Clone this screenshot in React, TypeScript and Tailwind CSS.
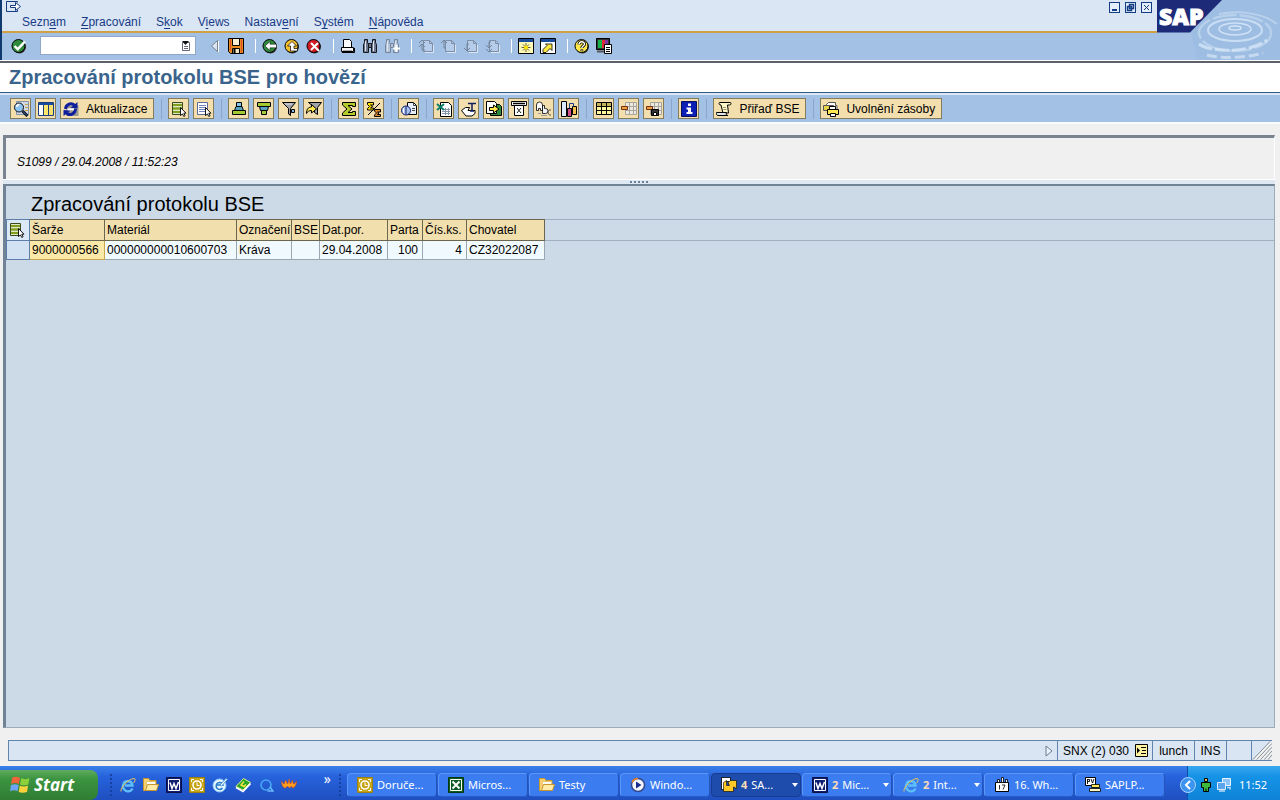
import type { ReactNode } from 'react';

/**
 * SAP GUI list screen with the Windows taskbar underneath
 */

interface IconProps {
  children: ReactNode;
}

function Icon({ children }: IconProps) {
  return (
    <svg
      viewBox="0 0 16 16"
      className="h-4 w-4 shrink-0"
      fill="none"
      stroke="#000"
      strokeWidth="1"
      aria-hidden="true"
    >
      {children}
    </svg>
  );
}

/* Standard toolbar icons */

const CheckIcon = () => (
  <Icon>
    <circle cx="8.5" cy="9" r="6.5" fill="#333" stroke="none" />
    <circle cx="7.5" cy="8" r="6.5" fill="#2f8a3c" />
    <path d="M3.5 8l3.2 3.2L14 3.5" stroke="#fff" strokeWidth="2.4" />
  </Icon>
);

const TriangleIcon = () => (
  <Icon>
    <path d="M11.5 2.5v11L5.5 8z" fill="#dbe6f4" stroke="#77808c" />
    <path d="M12.5 3v11" stroke="#fff" />
  </Icon>
);

const SaveIcon = () => (
  <Icon>
    <path d="M.5.5h15v15H2.5l-2-2z" fill="#e88a20" />
    <path d="M4.5.5h7v7h-7z" fill="#fbeed0" />
    <path d="M4.5 10.5h7v5h-7z" fill="#f6e6c0" />
    <path d="M6.5 11v4" strokeWidth="2" />
    <path d="M2.5 1.5v11M13.5 1.5v13" stroke="#d8502c" />
  </Icon>
);

const BackIcon = () => (
  <Icon>
    <circle cx="8.5" cy="9" r="6.5" fill="#333" stroke="none" />
    <circle cx="7.5" cy="8" r="6.5" fill="#2f8a3c" />
    <path d="M3 8l5-4.5v2.7h6.5v3.6H8v2.7z" fill="#fff" strokeWidth=".5" />
  </Icon>
);

const ExitIcon = () => (
  <Icon>
    <circle cx="8.5" cy="9" r="6.5" fill="#333" stroke="none" />
    <circle cx="7.5" cy="8" r="6.5" fill="#f6c02c" />
    <path d="M8 3.5l4.5 4.5H10v2.5h3.5V13h-7V8h-3z" fill="#fff" strokeWidth=".7" />
  </Icon>
);

const CancelIcon = () => (
  <Icon>
    <circle cx="8.5" cy="9" r="6.5" fill="#333" stroke="none" />
    <circle cx="7.5" cy="8" r="6.5" fill="#d01c24" />
    <path d="M5 5l8 8M12 5l-7 7" stroke="#fff" strokeWidth="2" />
  </Icon>
);

const PrintIcon = () => (
  <Icon>
    <path d="M3.5 1.5h6l2 2v6h-8z" fill="#fff" />
    <path d="M1.5 9.5h12v4h-12z" fill="#f4f4f4" />
    <path d="M2 14.5h12.5V10" />
    <path d="M3 12.5h9" stroke="#aaa" />
  </Icon>
);

interface BinocularsProps {
  next?: boolean;
}

const BinocularsIcon = ({ next }: BinocularsProps) => (
  <Icon>
    <g stroke={next ? '#74859c' : '#16181d'} fill={next ? '#b3c3d8' : '#6d788e'}>
      <path d="M2.5 1.5h3v3l1 2v8h-5v-8l1-2z" />
      <path d="M10.5 1.5h3v3l1 2v8h-5v-8l1-2z" />
      <path d="M6.5 5.5h3v4h-3z" />
      <path d="M3.5 3v10M11.5 3v10" stroke="#dfe6f0" />
    </g>
    {next && <path d="M9 10.5h7M12.5 7v7" stroke="#fff" strokeWidth="2" />}
  </Icon>
);

interface PageIconProps {
  dir: 'first' | 'prev' | 'next' | 'last';
}

const arrows = {
  first: 'M1 5l3-3 3 3M1 9l3-3 3 3M4 6v6h3',
  prev: 'M1 5l3-3 3 3M4 2v8h2',
  next: 'M2 10l3 3 3-3M5 13V6h2',
  last: 'M2 7l3 3 3-3M2 11l3 3 3-3M5 10V4h2',
};

const PageIcon = ({ dir }: PageIconProps) => (
  <Icon>
    <path d="M5.5 2.5h6l3 3v8h-9z" stroke="#7d8ea6" fill="#b5cdea" />
    <path d="M11.5 2.5v3h3" stroke="#7d8ea6" />
    <path d={arrows[dir]} stroke="#73849b" />
    <path d="M7 14.5h8.5V7" stroke="#d8e6f6" />
  </Icon>
);

const SessionIcon = () => (
  <Icon>
    <path d="M.5.5h15v15H.5z" fill="#fdf9b8" />
    <path d="M1 2.5h14" stroke="#1a4c9c" strokeWidth="3" />
    <path d="M8 5v9M3.5 9.5h9M5 6.5l6 6M11 6.5l-6 6" stroke="#3c3a10" strokeWidth=".8" />
    <circle cx="8" cy="9.5" r="2" fill="#ffe400" stroke="none" />
  </Icon>
);

const ShortcutIcon = () => (
  <Icon>
    <path d="M.5.5h15v15H.5z" fill="#fff" />
    <path d="M1 2.5h14" stroke="#1a4c9c" strokeWidth="3" />
    <path d="M3 14.5v-3l4-4L5.5 6H12v6.5l-2-2-4 4z" fill="#ffe840" strokeWidth=".8" />
  </Icon>
);

const HelpIcon = () => (
  <Icon>
    <circle cx="8.5" cy="9" r="6.5" fill="#333" stroke="none" />
    <circle cx="7.5" cy="8" r="6.5" fill="#ffe94a" />
    <path d="M5 6.5C5 3 10.5 3 10.5 6c0 2-2.7 2-2.7 4" strokeWidth="3" />
    <path d="M5 6.5C5 3 10.5 3 10.5 6c0 2-2.7 2-2.7 4" stroke="#fff" strokeWidth="1.4" />
    <path d="M6.8 11.5h2V13h-2z" fill="#fff" strokeWidth=".6" />
  </Icon>
);

const LayoutIcon = () => (
  <Icon>
    <path d="M.5.5h13v11H.5z" fill="#333" />
    <path d="M2 2h4v8H2z" fill="#18b048" stroke="none" />
    <path d="M6 2h3v8H6z" fill="#e02838" stroke="none" />
    <path d="M9 2h3v4H9z" fill="#8030a0" stroke="none" />
    <path d="M1 13.5h7" stroke="#555" strokeWidth="2" />
    <path d="M8.5 6.5h7v9h-7z" fill="#fff" />
    <path d="M10 9.5h4M10 11.5h4M10 13.5h4" />
  </Icon>
);

/* Application toolbar icons */

const DetailIcon = () => (
  <Icon>
    <path d="M3.5.5h12v13h-12z" fill="#cfd8e4" stroke="#8593a8" />
    <path d="M12 3.5h3M12 6.5h3M12 9.5h3" stroke="#c2a34a" />
    <circle cx="6" cy="6.5" r="4.5" fill="#8ec4f2" stroke="#111" />
    <path d="M3.5 6a3 3 0 013-2.5" stroke="#fff" strokeWidth="1.5" />
    <path d="M9.5 10l5 5" stroke="#111" strokeWidth="3" />
    <path d="M10 10.5l4 4" stroke="#2a6cc8" />
  </Icon>
);

const ColumnsIcon = () => (
  <Icon>
    <path d="M.5 1.5h15v13H.5z" fill="#fff" stroke="#1a3d80" />
    <path d="M6 4h4v10H6z" fill="#ffe86a" stroke="none" />
    <path d="M11 4h4v10h-4z" fill="#f8e070" stroke="none" />
    <path d="M1 3h14" stroke="#1a4c9c" strokeWidth="2" />
    <path d="M5.5 4v10M10.5 4v10" stroke="#1a3d80" />
  </Icon>
);

const RefreshIcon = () => (
  <Icon>
    <path d="M3.5 4.5h12v10.5h-12z" fill="#9a9a92" stroke="none" />
    <path d="M12 5C9.500 1 3 2.5 2.5 8" stroke="#10209c" strokeWidth="3" />
    <path d="M3 11c2 4 8.500 3.500 9.500-3" stroke="#10209c" strokeWidth="3" />
    <path d="M7.500 7l7 .5V1z" fill="#10209c" stroke="none" />
    <path d="M7.500 9.500L.5 9v6z" fill="#10209c" stroke="none" />
    <path d="M4.500 8.300h6.500" stroke="#fff" strokeWidth="2" />
  </Icon>
);

interface SelectIconProps {
  all?: boolean;
}

const SelectIcon = ({ all }: SelectIconProps) => (
  <Icon>
    <path d="M1.5 1.5h10v12h-10z" fill="#fff" stroke={all ? '#3a4a18' : '#5a6a9a'} />
    {all ? (
      <path d="M2 4h9M2 7.5h9M2 11h9" stroke="#7f9e1e" strokeWidth="2.4" />
    ) : (
      <path d="M3 4.5h7M3 6.5h7M3 8.5h7M3 10.5h7" stroke="#6f82bd" />
    )}
    <path d="M9.5 6.5v8l2-1.5 1.3 2.5 1.3-.8-1.3-2.5H15z" fill="#fff" strokeWidth=".9" />
  </Icon>
);

const SortUpIcon = () => (
  <Icon>
    <path d="M5.5 5.5v-4h5v4z" fill="#84c4e8" />
    <path d="M3.5 9.5l1.5-4h6l1.5 4z" fill="#58a0c0" />
    <path d="M1.5 13.5v-4h13v4z" fill="#a2c832" />
  </Icon>
);

const SortDownIcon = () => (
  <Icon>
    <path d="M1.5 1.5h13v4h-13z" fill="#a2c832" />
    <path d="M3.5 5.5h9l-1 4h-7z" fill="#58a0c0" />
    <path d="M5.5 9.5h5v4h-5z" fill="#a2c832" />
  </Icon>
);

const FilterIcon = () => (
  <Icon>
    <path d="M1.5 1.5h13l-5 6v7l-2-1.5V7.5z" fill="#a0a3a9" />
    <path d="M4 3h7" stroke="#e4e6ea" />
    <path d="M10.5 8.5h3v3h-3z" fill="#84b8e8" />
  </Icon>
);

const FilterDeleteIcon = () => (
  <Icon>
    <path d="M2.5 1.5h13l-4 5v7l-3-2v-5z" fill="#a0a3a9" />
    <path d="M.5 12.5c0-4 1.5-6.5 5-6.5V3.5l5 4.500-5 4V9.5c-2.500 0-4 1-5 3z" fill="#ffe850" />
  </Icon>
);

const SumIcon = () => (
  <Icon>
    <path d="M1.5 1.5h13v4h-3v-1H7L11 8l-4 3.5h4.5v-1h3v4h-13V12L6 8 1.5 4z" fill="#b4cc2a" />
  </Icon>
);

const SubtotalIcon = () => (
  <Icon>
    <path d="M1.5 1.5h6V4h-3l2 1.5-2 1.5h3v2h-6V7.5l2-2-2-2z" fill="#ffe400" />
    <path d="M8.5 8.5h6V11h-3l1.5 1-1.5 1.5h3v2h-6V14l2-2-2-2z" fill="#e08a2c" />
    <path d="M2 14L14 2" />
  </Icon>
);

const PreviewIcon = () => (
  <Icon>
    <path d="M6.5 1.5h6l3 3v9h-9z" fill="#e6eefa" />
    <path d="M12.5 1.5v3h3M11 7.5h3M11 9.5h3" stroke="#444" />
    <circle cx="5" cy="9.5" r="4.5" fill="#a9c4ee" stroke="#0f1a70" />
    <path d="M5 5.5v8" stroke="#0f1a70" />
    <path d="M2.5 7v5" stroke="#fff" />
  </Icon>
);

const ExcelSheetIcon = () => (
  <Icon>
    <path d="M4.5 1.5h8l3 3v11h-11z" fill="#fff" />
    <path d="M6 8.5h8M6 10.5h8M6 12.5h8M9.5 7v7M12.5 7v7" stroke="#8794aa" />
    <path d="M1 3l7 6M8 3L1 9" stroke="#0d7e6c" strokeWidth="2" />
  </Icon>
);

const WordIcon = () => (
  <Icon>
    <path d="M.5 9.5l4-3h4L7 9.5h7v3L11 15H5z" fill="#fff" />
    <path d="M7 2.5h8M11 2.5v8M9 10h4" stroke="#101c60" strokeWidth="1.5" />
  </Icon>
);

const ExportIcon = () => (
  <Icon>
    <path d="M4.5 3.5h9l2 2v9h-11z" fill="#2f8a3c" />
    <path d="M.5.5h8l2 2v10H.5z" fill="#fff" />
    <path d="M3.5 6.5h4V4L13 8l-5.5 4V9.5h-4z" fill="#ffe850" />
  </Icon>
);

const MailIcon = () => (
  <Icon>
    <path d="M.5.5h15v4H.5z" fill="#fff" />
    <path d="M2 2.5h12" strokeWidth="1.5" />
    <path d="M3.5 4.5h9v10h-9z" fill="#fff" />
    <path d="M6 7l4 5M10 7l-4 5" stroke="#222" />
  </Icon>
);

const AbcIcon = () => (
  <Icon>
    <path d="M.5 9.5V4a3 3 0 016 0v5.5h-2v-2h-2v2z" fill="#fff" strokeWidth=".8" />
    <path d="M6.5 4.5h2v3h1a2 2 0 010 5h-3z" fill="#f2f6fc" strokeWidth=".8" />
    <path d="M15 9c-4-1-4 5.5 0 5" stroke="#444" />
    <path d="M2 12.5h3M5 14.5h6" stroke="#999" />
  </Icon>
);

const ChartIcon = () => (
  <Icon>
    <path d="M.5.5h5v15h-5z" fill="#dceafa" />
    <path d="M6.5 7.5h4v8h-4z" fill="#d0508c" />
    <path d="M11.5 5.5h4v8h-4z" fill="#f6c050" />
    <path d="M8.5 7V2.5h4v3" stroke="#1a3d80" />
  </Icon>
);

interface GridIconProps {
  variant: 'full' | 'pick' | 'save';
}

const GridIcon = ({ variant }: GridIconProps) => (
  <Icon>
    {variant === 'full' ? (
      <>
        <path d="M.5 1.5h15v12H.5z" fill="#fff6a0" />
        <path d="M1 3.5h14" stroke="#c8b458" strokeWidth="3" />
        <path d="M.5 5.5h15M.5 9.5h15M5.5 1.5v12M10.5 1.5v12" />
      </>
    ) : (
      <>
        <path d="M4.5 1.5h11v12h-11z" fill="#ece8e2" stroke="#a9a49c" />
        <path d="M4.5 5.5h11M4.5 9.5h11M8.5 1.5v12M12.5 1.5v12" stroke="#a9a49c" />
        <path d="M.5 5.5h6v3h-6z" fill="#f0a040" stroke="#703010" />
      </>
    )}
    {variant === 'save' && (
      <>
        <path d="M5.5 8.5h7v6h-7z" fill="#333" />
        <path d="M7.5 11.5h3v3h-3z" fill="#fff" />
      </>
    )}
  </Icon>
);

const InfoIcon = () => (
  <Icon>
    <path d="M.5.5h15v15H.5z" fill="#0c1fb4" stroke="#071060" />
    <path d="M7 2.5h3V5H7zM5.5 6.5H10V11h1.5v2h-6v-2H7V8.5H5.5z" fill="#fff" stroke="none" />
  </Icon>
);

const ScrollIcon = () => (
  <Icon>
    <path d="M3.5 1.5h11c1 1 .5 2.500-1 2.500h-2l1 8H7L5 4C3 4 2.5 2.500 3.5 1.5z" fill="#fff6c8" />
    <path d="M.5 11.5h10c-1 2 0 3 1.500 3H2c-1.500 0-2-2-1.500-3z" fill="#e0e6e8" />
    <path d="M7 6.5h3M7.500 8.500h3" stroke="#9a9a70" />
  </Icon>
);

const StackedPrintIcon = () => (
  <Icon>
    <path d="M3.5 3.5l2-2h7v3H14v4H3.5z" fill="#fff" stroke="#555" />
    <path d="M.5 4.5h10v5H.5z" fill="#e8d448" stroke="#555" />
    <path d="M6.5 5.5h6v3h-6z" fill="#fff" />
    <path d="M4.5 8.5h11v5h-11z" fill="#ffe850" />
    <path d="M7.5 12.5h5v3h-5z" fill="#fff" />
  </Icon>
);

/* Taskbar icons */

const WinFlagIcon = () => (
  <svg viewBox="0 0 18 18" className="h-5 w-5 shrink-0" aria-hidden="true">
    <path d="M2 2.5C4 1 6.5 1.5 9 2.5L8 8C6 7 3.5 6.8 1 8z" fill="#f0643c" />
    <path d="M10 3c2.5 1 5 1 7.5 0l-1 5.5c-2.5 1-5 1-7.5 0z" fill="#8cd03c" />
    <path d="M.8 9.2c2.5-1.2 5-1 7 0l-1 5.5c-2-1.2-4.300-1.200-6.800 0z" fill="#6fa4f4" />
    <path d="M8.8 9.7c2.5 1 5 1 7.5 0l-1 5.5c-2.5 1-5 1-7.5 0z" fill="#fcd23c" />
  </svg>
);

const ExplorerIcon = () => (
  <Icon>
    <path d="M12.5 11.5A5 5 0 113.500 7c1-4 8.500-4 9 1.500H5" stroke="#5ec0fa" strokeWidth="2.4" />
    <path d="M1 14.5C0 11 8 2 14 1.5c2 0 1 3-.5 4.500" stroke="#e9c65a" />
  </Icon>
);

const FolderIcon = () => (
  <Icon>
    <path d="M.5 1.5h5l1.500 2h6v10H.5z" fill="#f8d070" stroke="#c8962c" />
    <path d="M3.5 4.5h9v7h-9z" fill="#fff" stroke="#e8c468" />
    <path d="M2.5 13.5l2-6h11l-2 6z" fill="#ffeaa8" stroke="#c8962c" />
  </Icon>
);

const WordAppIcon = () => (
  <Icon>
    <path d="M.5.5h15v15H.5z" fill="#101c70" stroke="#0a1048" />
    <path d="M2.5 2.5h11v11h-11z" stroke="#fff" />
    <path d="M4 5.5l2 6 2-5 2 5 2.500-6.500" stroke="#fff" strokeWidth="1.5" />
  </Icon>
);

const OutlookIcon = () => (
  <Icon>
    <path d="M.5.5h15v15H.5z" fill="#c8a418" stroke="#9c8010" />
    <path d="M2.5 5V2.5H5M11 2.5h2.500V5M2.5 11v2.500H5M11 13.500h2.500V11" stroke="#fff" />
    <circle cx="8" cy="8" r="4" fill="#c8a418" stroke="#fff" strokeWidth="1.6" />
    <path d="M8 5.5v3h2.500" stroke="#fff" />
  </Icon>
);

const GlobeIcon = () => (
  <Icon>
    <circle cx="7.5" cy="8.5" r="6.5" fill="#e4f4ff" stroke="#8cc8f4" />
    <path d="M10.5 11a3.500 3.500 0 11.500-3H5" stroke="#2478c8" strokeWidth="1.5" />
    <path d="M8 8l6-6.500 1.500 1-6 6.500z" fill="#fff" stroke="#4c98d8" />
  </Icon>
);

const BookIcon = () => (
  <Icon>
    <path d="M1 9.5l7.500-8 7 4L8 13z" fill="#28a428" stroke="#e8f480" />
    <path d="M1 10.5l7 4 7.500-8" stroke="#fff" strokeWidth="1.6" />
    <path d="M9 4.5L6 8l3 1.500 2-2" stroke="#f8e840" strokeWidth="1.5" />
  </Icon>
);

const QuickIcon = () => (
  <Icon>
    <circle cx="8" cy="8" r="5" stroke="#46a8f4" strokeWidth="1.6" />
    <path d="M9.5 14H15l-3-4" stroke="#6cbcfc" strokeWidth="1.4" />
  </Icon>
);

const FlameIcon = () => (
  <Icon>
    <path
      d="M.5 4c1 1 1.500 3 3 3 0-2 1-3 1-4 1 1 1.500 3 2 4 1-1 1-3 1.500-5 1 2 .5 4 1.500 5 1-1 1-3 2-4 0 1 .5 3 1 4 1.500 0 2-2 3-3 0 4-2 7-4 7l-1-2-2 2-2-2-2 2C2 11 .5 8 .5 4z"
      fill="#ffa020"
      stroke="#d84810"
      strokeWidth=".6"
    />
  </Icon>
);

const ExcelAppIcon = () => (
  <Icon>
    <path d="M.5.5h15v15H.5z" fill="#0c5c20" stroke="#043810" />
    <path d="M2.5 2.5h11v11h-11z" stroke="#fff" />
    <path d="M4.5 4.5l7 7M11.5 4.5l-7 7" stroke="#fff" strokeWidth="2" />
  </Icon>
);

const MediaIcon = () => (
  <Icon>
    <circle cx="8" cy="8" r="6.5" fill="#f4f7fc" stroke="#34488c" strokeWidth="1.5" />
    <path d="M2 5.5a6.500 6.500 0 016-4" stroke="#f08020" strokeWidth="1.5" />
    <path d="M6 4.5v7L11.500 8z" fill="#1c2c8c" stroke="none" />
  </Icon>
);

const SapAppIcon = () => (
  <Icon>
    <path d="M.5.5h9v4h-5v8h-4z" fill="#fff" strokeWidth=".8" />
    <path d="M2.5 14.5v-9l3-2v5h3L7 5.500 9.500 3.500h6v8l-3-1.500v4.500z" fill="#ffc828" strokeWidth=".6" />
  </Icon>
);

const WhatIcon = () => (
  <Icon>
    <path d="M1.5 5.5h13v9h-13z" fill="#fff" />
    <path d="M3.5 2.5h2v3h-2zM7.5.5h2v5h-2zM11.5 2.5h2v3h-2z" fill="#eee" strokeWidth=".8" />
    <path d="M5.5 8v4.500M8 8h3l-2 4.500" stroke="#333" />
  </Icon>
);

const SaplpIcon = () => (
  <Icon>
    <path d="M.5.5h10v8H.5z" fill="#fff" />
    <path d="M2.5 2v5M2.5 2.5h2v2h-2M6 2l1.500 4L9 2" strokeWidth=".9" />
    <path d="M6.5 7.5h8v3h-8z" fill="#ffe850" strokeWidth=".8" />
    <path d="M4.5 11.5h11v3h-11z" fill="#fdf6c0" strokeWidth=".8" />
  </Icon>
);

const PersonIcon = () => (
  <Icon>
    <path d="M6.5 1.5h3v3h-3z" fill="#e0b850" />
    <path d="M3.5 5.5h9v5h-2v4h-5v-4h-2z" fill="#3cb83c" />
    <path d="M8 11.5v3" />
  </Icon>
);

const NetworkIcon = () => (
  <Icon>
    <path d="M6.5 1.5h8v7h-8z" fill="#8cc4f8" stroke="#e8f4ff" />
    <path d="M1.5 5.5h8v7h-8z" fill="#5ca4ec" stroke="#d8ecff" />
    <path d="M3 14h6M11 10.5h3v2" stroke="#c0d8f0" strokeWidth="1.5" />
  </Icon>
);

const menus = [
  { before: 'Sezn', key: 'a', after: 'm' },
  { before: '', key: 'Z', after: 'pracování' },
  { before: 'S', key: 'k', after: 'ok' },
  { before: 'V', key: 'i', after: 'ews' },
  { before: 'Nastav', key: 'e', after: 'ní' },
  { before: 'S', key: 'y', after: 'stém' },
  { before: '', key: 'N', after: 'ápověda' },
];

interface Tool {
  label: string;
  icon: ReactNode;
  text?: string;
}

const standardTools: Tool[][] = [
  [
    { label: 'Skrýt pole', icon: <TriangleIcon /> },
    { label: 'Uložit', icon: <SaveIcon /> },
  ],
  [
    { label: 'Zpět', icon: <BackIcon /> },
    { label: 'Ukončit', icon: <ExitIcon /> },
    { label: 'Zrušit', icon: <CancelIcon /> },
  ],
  [
    { label: 'Tisk', icon: <PrintIcon /> },
    { label: 'Hledat', icon: <BinocularsIcon /> },
    { label: 'Hledat další', icon: <BinocularsIcon next /> },
  ],
  [
    { label: 'První strana', icon: <PageIcon dir="first" /> },
    { label: 'Předchozí strana', icon: <PageIcon dir="prev" /> },
    { label: 'Další strana', icon: <PageIcon dir="next" /> },
    { label: 'Poslední strana', icon: <PageIcon dir="last" /> },
  ],
  [
    { label: 'Nový mód', icon: <SessionIcon /> },
    { label: 'Zástupce', icon: <ShortcutIcon /> },
  ],
  [
    { label: 'Nápověda', icon: <HelpIcon /> },
    { label: 'Úprava layoutu', icon: <LayoutIcon /> },
  ],
];

const appTools: Tool[][] = [
  [
    { label: 'Detail', icon: <DetailIcon /> },
    { label: 'Sloupce', icon: <ColumnsIcon /> },
    { label: 'Aktualizace', icon: <RefreshIcon />, text: 'Aktualizace' },
  ],
  [
    { label: 'Označit vše', icon: <SelectIcon all /> },
    { label: 'Zrušit označení', icon: <SelectIcon /> },
  ],
  [
    { label: 'Třídit vzestupně', icon: <SortUpIcon /> },
    { label: 'Třídit sestupně', icon: <SortDownIcon /> },
    { label: 'Filtr', icon: <FilterIcon /> },
    { label: 'Zrušit filtr', icon: <FilterDeleteIcon /> },
  ],
  [
    { label: 'Součet', icon: <SumIcon /> },
    { label: 'Mezisoučet', icon: <SubtotalIcon /> },
  ],
  [{ label: 'Náhled tisku', icon: <PreviewIcon /> }],
  [
    { label: 'Excel', icon: <ExcelSheetIcon /> },
    { label: 'Word', icon: <WordIcon /> },
    { label: 'Lokální soubor', icon: <ExportIcon /> },
    { label: 'Odeslat', icon: <MailIcon /> },
    { label: 'ABC analýza', icon: <AbcIcon /> },
    { label: 'Graf', icon: <ChartIcon /> },
  ],
  [
    { label: 'Změnit layout', icon: <GridIcon variant="full" /> },
    { label: 'Vybrat layout', icon: <GridIcon variant="pick" /> },
    { label: 'Uložit layout', icon: <GridIcon variant="save" /> },
  ],
  [{ label: 'Informace', icon: <InfoIcon /> }],
  [{ label: 'Přiřaď BSE', icon: <ScrollIcon />, text: 'Přiřaď BSE' }],
  [{ label: 'Uvolnění zásoby', icon: <StackedPrintIcon />, text: 'Uvolnění zásoby' }],
];

const columns = [
  { title: 'Šarže', value: '9000000566' },
  { title: 'Materiál', value: '000000000010600703' },
  { title: 'Označení', value: 'Kráva' },
  { title: 'BSE', value: '' },
  { title: 'Dat.por.', value: '29.04.2008' },
  { title: 'Parta', value: '100', right: true },
  { title: 'Čís.ks.', value: '4', right: true },
  { title: 'Chovatel', value: 'CZ32022087' },
];

const quickLaunch = [
  { label: 'Internet Explorer', icon: <ExplorerIcon /> },
  { label: 'Průzkumník', icon: <FolderIcon /> },
  { label: 'Word', icon: <WordAppIcon /> },
  { label: 'Outlook', icon: <OutlookIcon /> },
  { label: 'Web', icon: <GlobeIcon /> },
  { label: 'Slovník', icon: <BookIcon /> },
  { label: 'QuickTime', icon: <QuickIcon /> },
  { label: 'Plamen', icon: <FlameIcon /> },
];

const tasks = [
  { icon: <OutlookIcon />, title: 'Doruče...' },
  { icon: <ExcelAppIcon />, title: 'Micros...' },
  { icon: <FolderIcon />, title: 'Testy' },
  { icon: <MediaIcon />, title: 'Windo...' },
  { icon: <SapAppIcon />, title: 'SA...', count: 4, active: true },
  { icon: <WordAppIcon />, title: 'Mic...', count: 2 },
  { icon: <ExplorerIcon />, title: 'Int...', count: 2 },
  { icon: <WhatIcon />, title: '16. Wh...' },
  { icon: <SaplpIcon />, title: 'SAPLP...' },
];

function SapLogo() {
  return (
    <svg viewBox="0 0 123 60" className="h-[60px] w-[123px] shrink-0" role="img" aria-label="SAP">
      <rect width="123" height="60" fill="#a3c1e5" />
      <path d="M66 0h57v60H40l-6-28z" fill="#9dbde2" />
      <g fill="none" stroke="#d6e6f8">
        <ellipse cx="78" cy="28" rx="6" ry="2" strokeWidth="1.5" />
        <ellipse cx="78" cy="29" rx="16" ry="6" strokeWidth="1.5" strokeOpacity=".9" />
        <ellipse cx="78" cy="30" rx="27" ry="11" strokeWidth="2" strokeOpacity=".8" />
        <ellipse cx="78" cy="33" rx="36" ry="18" strokeWidth="2.5" strokeOpacity=".45" strokeDasharray="24 3" />
        <path d="M42 44c10 8 50 10 68-4" strokeWidth="3" strokeOpacity=".8" strokeDasharray="14 3" />
        <path d="M50 55c14 4 40 3 56-2" strokeWidth="3" strokeOpacity=".7" strokeDasharray="10 4" />
        <path d="M62 14c20-4 44-1 58 10" strokeWidth="2" strokeOpacity=".5" />
      </g>
      <path d="M0 0h65L33 32.500H0z" fill="#1c2a78" />
      <text
        x="2"
        y="25"
        fill="#fff"
        stroke="#fff"
        strokeWidth="1"
        fontSize="23"
        fontWeight="800"
        fontFamily="'Open Sans', 'Noto Sans', sans-serif"
      >
        SAP
      </text>
    </svg>
  );
}

function WindowButtons() {
  const style = 'flex h-[11px] w-[11px] items-center justify-center border border-[#123c84] bg-[#e4eefa]';
  return (
    <div className="flex gap-[5px] pt-[2px] pr-[5px]">
      <button className={style} aria-label="Minimalizovat">
        <svg viewBox="0 0 9 9" className="h-[9px] w-[9px]">
          <path d="M2 7h5" stroke="#123c84" strokeWidth="2" />
        </svg>
      </button>
      <button className={style} aria-label="Obnovit">
        <svg viewBox="0 0 9 9" className="h-[9px] w-[9px]" fill="#e4eefa" stroke="#123c84" strokeWidth="1.5">
          <path d="M3.5 1.5h4v4h-4zM1.5 3.5h4v4h-4z" />
        </svg>
      </button>
      <button className={style} aria-label="Zavřít">
        <svg viewBox="0 0 9 9" className="h-[9px] w-[9px]">
          <path d="M2 2l5 5M7 2L2 7" stroke="#123c84" />
        </svg>
      </button>
    </div>
  );
}

function MenuBar() {
  return (
    <div className="flex h-[31px] justify-between bg-[#dbe6f4]">
      <div className="flex flex-col pl-1">
        <svg viewBox="0 0 16 14" className="h-[14px] w-4" fill="none" stroke="#123c84" aria-hidden="true">
          <path d="M11.5 1.5H.5v10h11v-2M11.5 1.5v1" />
          <path d="M4.5 5.5h5v-3l5 4-5 4v-3h-5z" fill="#fff" />
        </svg>
        <nav className="flex gap-[15px] pl-4 text-xs leading-4 text-[#173a86]">
          {menus.map((m) => (
            <button key={m.before + m.key + m.after} className="whitespace-nowrap">
              {m.before}
              <span className="underline underline-offset-2">{m.key}</span>
              {m.after}
            </button>
          ))}
        </nav>
      </div>
      <WindowButtons />
    </div>
  );
}

function StandardToolbar() {
  return (
    <div className="flex h-[29px] items-center border-t-2 border-[#d0a144] bg-[#a3c1e5] pb-[2px]">
      <button aria-label="Enter" className="ml-[6px] flex w-[22px] justify-center">
        <CheckIcon />
      </button>
      <div className="mr-[7px] ml-[10px] flex h-[19px] w-[156px] items-center border border-[#8fa8c8] bg-white pr-1">
        <input aria-label="Příkaz" className="min-w-0 flex-1 px-1 text-xs outline-none" />
        <button aria-label="Historie příkazů">
          <svg viewBox="0 0 10 12" className="h-3 w-[10px]" fill="none" stroke="#667">
            <path d="M1.5 2.5h7v8h-7zM3 6.5h4M3 8.5h4" />
            <path d="M1 1h7L4.5 5z" fill="#111" stroke="none" />
          </svg>
        </button>
      </div>
      {standardTools.map((group, i) => (
        <div key={i} className="flex items-center">
          {i > 0 && <span className="mr-[3px] ml-2 h-[14px] w-px bg-white" />}
          {group.map((tool) => (
            <button key={tool.label} aria-label={tool.label} className="flex w-[22px] justify-center">
              {tool.icon}
            </button>
          ))}
        </div>
      ))}
    </div>
  );
}

function AppToolbar() {
  return (
    <div className="flex h-[31px] items-center gap-1 border-t-2 border-b-2 border-t-[#dbe8f8] border-b-[#f8fbff] bg-[#a3c1e5] pl-[10px]">
      {appTools.map((group, i) => (
        <div key={i} className="flex items-center gap-1">
          {i > 0 && <span className="mr-[2px] ml-[3px] h-5 w-px bg-[#8ba6c6]" />}
          {group.map((tool) => (
            <button
              key={tool.label}
              aria-label={tool.label}
              className={
                tool.text
                  ? 'flex h-[21px] items-center gap-[7px] border border-[#837b5c] bg-[#f3deae] pr-[6px] pl-[2px] text-xs whitespace-nowrap'
                  : 'flex h-[21px] w-[21px] items-center justify-center border border-[#837b5c] bg-[#f3deae]'
              }
            >
              {tool.icon}
              {tool.text}
            </button>
          ))}
        </div>
      ))}
    </div>
  );
}

function BatchTable() {
  return (
    <table className="w-full table-fixed border-collapse text-left text-xs leading-4">
      <colgroup>
        <col className="w-[23px]" />
        <col className="w-[75px]" />
        <col className="w-[132px]" />
        <col className="w-[55px]" />
        <col className="w-[28px]" />
        <col className="w-[68px]" />
        <col className="w-[35px]" />
        <col className="w-[44px]" />
        <col className="w-[78px]" />
        <col />
      </colgroup>
      <thead>
        <tr className="h-[21px]">
          <th className="border border-[#5c7ea8] bg-[#dbe8f6] p-0 pl-[2px]">
            <button aria-label="Označit vše" className="block">
              <SelectIcon all />
            </button>
          </th>
          {columns.map((c) => (
            <th
              key={c.title}
              className="overflow-hidden border border-[#6b6650] bg-[#f2dfae] p-0 pl-[2px] font-normal whitespace-nowrap"
            >
              {c.title}
            </th>
          ))}
          <td className="border-t border-b border-[#9fb0c0] p-0" />
        </tr>
      </thead>
      <tbody>
        <tr className="h-[19px]">
          <td className="border border-[#5c7ea8] bg-[#d3e2f3] p-0" />
          {columns.map((c, i) => (
            <td
              key={c.title}
              className={
                i === 0
                  ? 'border border-[#c9a850] bg-[#fce9a8] p-0 pl-[2px] whitespace-nowrap'
                  : c.right
                    ? 'border border-[#9aa7b0] bg-[#f0f9fe] p-0 pr-1 text-right whitespace-nowrap'
                    : 'border border-[#9aa7b0] bg-[#f0f9fe] p-0 pl-[2px] whitespace-nowrap'
              }
            >
              {c.value}
            </td>
          ))}
          <td className="p-0" />
        </tr>
      </tbody>
    </table>
  );
}

function StatusBar() {
  return (
    <footer className="mx-2 mt-3 mb-[5px] flex h-[21px] items-stretch border-y border-l border-[#5f84ad] bg-[#d9e5f3] text-xs whitespace-nowrap">
      <div className="flex flex-1 items-center justify-end pr-1">
        <svg viewBox="0 0 8 12" className="h-3 w-2" fill="#eef4fb" stroke="#6a7a90">
          <path d="M1 1v10l6-5z" />
        </svg>
      </div>
      <div className="flex w-[95px] items-center justify-between border-l border-[#5f84ad] pr-1 pl-[5px]">
        SNX (2) 030
        <svg viewBox="0 0 13 13" className="h-[13px] w-[13px]" fill="none" stroke="#000">
          <path d="M.5.5h12v12H.5z" fill="#fff3a0" />
          <path d="M6 3.5h5M7 6.5h4M6 9.5h5" />
          <path d="M2 3.5v6l3-3z" fill="#000" stroke="none" />
        </svg>
      </div>
      <div className="flex w-[42px] items-center justify-center border-l border-[#5f84ad]">lunch</div>
      <div className="flex w-8 items-center justify-center border-l border-[#5f84ad]">INS</div>
      <div className="w-[25px] border-l border-[#5f84ad]" />
      <svg viewBox="0 0 21 19" className="h-[19px] w-[21px] border-l border-[#5f84ad]" stroke="#7b8794" fill="none">
        <path d="M1 19L19 0h2v19z" fill="#f2f2f0" stroke="none" />
        <path d="M1 19L19 0M5 19L21 2M9 19L21 6M13 19l8-9M17 19l4-5" />
      </svg>
    </footer>
  );
}

function Grip() {
  return <span className="h-[22px] w-0 border-l-2 border-dotted border-[#1740a0]" />;
}

function Taskbar() {
  return (
    <div className="flex h-[34px] shrink-0 items-stretch bg-linear-to-b from-[#3b80ea] via-[#2763dd] via-30% to-[#1f4fc0] font-['Noto_Sans','Open_Sans',sans-serif] text-[11px] text-white">
      <button className="mt-1 flex w-[98px] items-center gap-1 rounded-r-lg bg-linear-to-b from-[#5eac5c] via-[#3c9440] via-30% to-[#2f7d32] pl-[10px] font-['Open_Sans','Noto_Sans',sans-serif] text-[17px] font-bold italic">
        <WinFlagIcon />
        Start
      </button>
      <div className="flex items-center gap-2 pt-1 pl-3">
        <Grip />
        <div className="flex gap-[7px]">
          {quickLaunch.map((q) => (
            <button key={q.label} aria-label={q.label}>
              {q.icon}
            </button>
          ))}
        </div>
        <span className="w-[26px] pb-3 text-right text-sm leading-4">»</span>
        <Grip />
      </div>
      <div className="flex min-w-0 flex-1 gap-px pt-[7px] pb-[3px] pl-[6px]">
        {tasks.map((t) => (
          <button
            key={t.title}
            className={
              t.active
                ? 'flex w-[90px] items-center gap-1 rounded-sm border border-[#1a3c90] bg-[#1e4cac] pl-[9px] whitespace-nowrap'
                : 'flex w-[90px] items-center gap-1 rounded-sm border border-[#5b98f8] border-r-[#2454b8] border-b-[#2a5cc8] bg-[#3b7df0] pl-[9px] whitespace-nowrap'
            }
          >
            {t.icon}
            <span>
              {t.count && <b className="mr-1 font-bold text-[#fbdcb8]">{t.count}</b>}
              {t.title}
            </span>
            {t.count && (
              <svg viewBox="0 0 6 4" className="mr-[2px] ml-auto h-1 w-[6px]" fill="#fff">
                <path d="M0 0h6L3 4z" />
              </svg>
            )}
          </button>
        ))}
      </div>
      <div className="w-[101px] pl-2">
        <div className="flex h-full items-center justify-between border-l border-[#0d4fa8] bg-linear-to-b from-[#38a8f0] via-[#1593e6] via-30% to-[#0f83d8] pt-1 pr-[13px]">
          <div className="-ml-2 flex items-center gap-[2px]">
            <button aria-label="Zobrazit skryté ikony">
              <Icon>
                <circle cx="8" cy="8" r="7.5" fill="#3c94f0" stroke="#a8d4fc" />
                <path d="M10 4L6 8l4 4" stroke="#fff" strokeWidth="2" />
              </Icon>
            </button>
            <PersonIcon />
            <NetworkIcon />
          </div>
          <time>11:52</time>
        </div>
      </div>
    </div>
  );
}

export default function App() {
  return (
    <div className="flex h-screen flex-col overflow-hidden bg-[#f0f0f0] font-['Liberation_Sans',Arial,sans-serif] text-black">
      <header className="flex border-b border-white">
        <div className="min-w-0 flex-1 border-l-2 border-[#0f3a70]">
          <MenuBar />
          <StandardToolbar />
        </div>
        <SapLogo />
      </header>

      <h1 className="border-t-2 border-b border-t-[#5c6068] border-b-[#33587f] bg-white pb-px pl-[9px] text-xl leading-7 font-bold text-[#3a648c]">
        Zpracování protokolu BSE pro hovězí
      </h1>
      <AppToolbar />

      <main className="mr-[5px] ml-[3px] flex min-h-0 flex-1 flex-col pt-[11px]">
        <section className="flex h-[44px] items-center border-t-[3px] border-r border-l-[3px] border-[#7a8490] border-r-white pt-[7px] pl-[11px] text-xs italic">
          S1099 / 29.04.2008 / 11:52:23
        </section>
        <div className="flex h-[5px] items-center justify-center border-t border-white bg-[#dde8f3]">
          <span className="w-[18px] border-t-2 border-dotted border-[#6b7f95]" />
        </div>
        <section className="min-h-0 flex-1 border border-t-2 border-l-[3px] border-[#9cabb8] border-t-[#6f8296] border-l-[#6f8296] bg-[#ccdae8]">
          <h2 className="pt-[4px] pb-[1px] pl-[25px] text-xl leading-7">Zpracování protokolu BSE</h2>
          <BatchTable />
        </section>
      </main>

      <StatusBar />
      <Taskbar />
    </div>
  );
}
